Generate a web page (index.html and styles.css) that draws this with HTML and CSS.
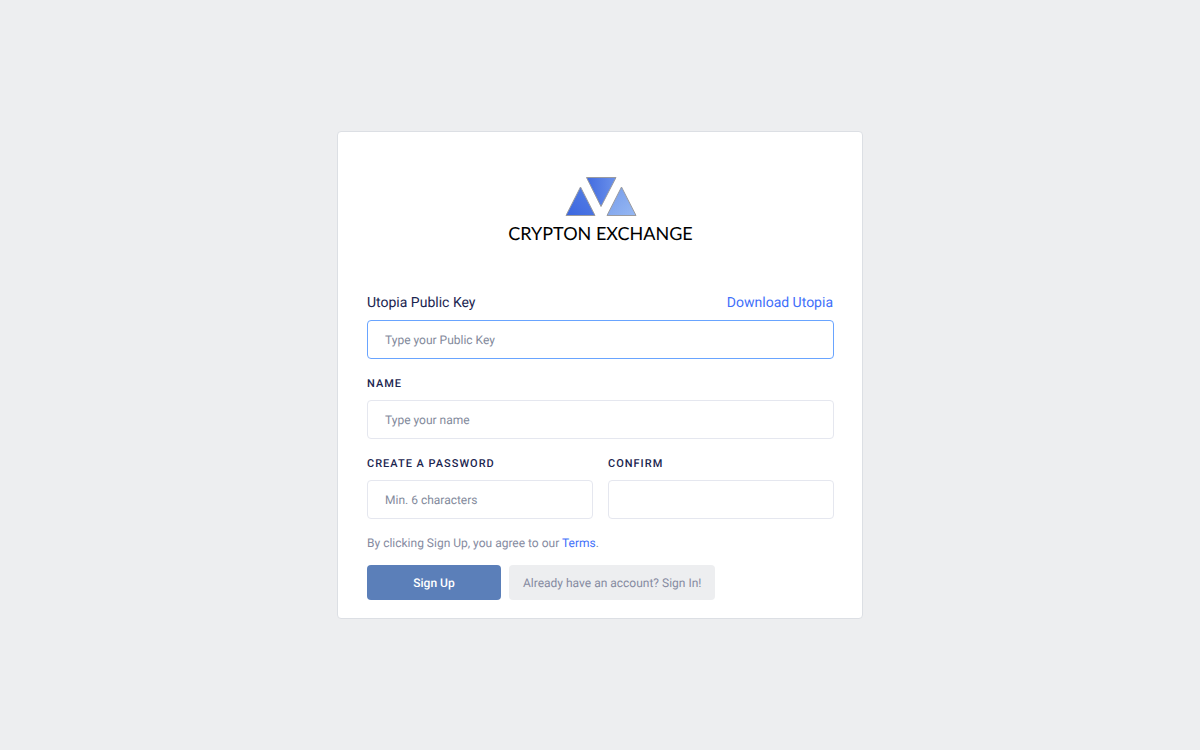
FILE: index.html
```html
<!DOCTYPE html>
<html lang="en">
<head>
<meta charset="utf-8">
<meta name="viewport" content="width=device-width, initial-scale=1">
<title>Crypton Exchange - Sign Up</title>
<link rel="stylesheet" href="styles.css">
</head>
<body>
<main class="card">
  <div class="logo">
    <svg class="logo-mark" width="72" height="40" viewBox="0 0 72 40" aria-hidden="true">
      <defs>
        <linearGradient id="left" x1="0" y1="1" x2="1" y2="0"><stop offset="0" stop-color="#3b66e0"/><stop offset="1" stop-color="#5680e4"/></linearGradient>
        <linearGradient id="middle" x1="0" y1="0" x2="1" y2="0"><stop offset="0" stop-color="#426be0"/><stop offset="1" stop-color="#6c92ea"/></linearGradient>
        <linearGradient id="right" x1="0" y1="0" x2="1" y2="1"><stop offset="0" stop-color="#759bea"/><stop offset="1" stop-color="#96b8f3"/></linearGradient>
      </defs>
      <g stroke="#9a9ba0" stroke-width="1">
        <path d="M15.500 10L30 38.500H1Z" fill="url(#left)"/>
        <path d="M21.500 0.500H51L36 29.500Z" fill="url(#middle)"/>
        <path d="M56.500 10L71 38.500H42Z" fill="url(#right)"/>
      </g>
    </svg>
    <span class="logo-name">CRYPTON EXCHANGE</span>
  </div>
  <form class="form">
    <div class="field">
      <div class="label-row">
        <label class="label-key" for="key">Utopia Public Key</label>
        <a class="download" href="#">Download Utopia</a>
      </div>
      <input class="input input-active" id="key" type="text" placeholder="Type your Public Key">
    </div>
    <div class="field">
      <label class="label" for="name">NAME</label>
      <input class="input" id="name" type="text" placeholder="Type your name">
    </div>
    <div class="pair">
      <div class="field">
        <label class="label" for="password">CREATE A PASSWORD</label>
        <input class="input" id="password" type="password" placeholder="Min. 6 characters">
      </div>
      <div class="field">
        <label class="label" for="confirm">CONFIRM</label>
        <input class="input" id="confirm" type="password">
      </div>
    </div>
    <p class="agree">By clicking Sign Up, you agree to our <a href="#">Terms</a>.</p>
    <div class="actions">
      <button class="button button-primary" type="submit">Sign Up</button>
      <button class="button button-light" type="button">Already have an account? Sign In!</button>
    </div>
  </form>
</main>
</body>
</html>
```
FILE: styles.css
```css
* {
  box-sizing: border-box;
}

body {
  margin: 0;
  min-height: 100vh;
  display: flex;
  align-items: center;
  justify-content: center;
  background: #edeef0;
  color: #1b2550;
  font-family: Roboto, sans-serif;
  font-size: 12px;
  text-rendering: geometricPrecision;
}

a {
  color: #3f70fa;
  text-decoration: none;
}

.card {
  width: 100%;
  max-width: 526px;
  padding: 45px 28px 18px 29px;
  background: #fff;
  border: 1px solid #dcdfe4;
  border-radius: 4px;
}

.logo {
  display: flex;
  flex-direction: column;
  align-items: center;
  margin-bottom: 48px;
}

.logo-name {
  margin-top: 4px;
  color: #000;
  font-family: "Century Gothic", Lato, sans-serif;
  font-size: 18px;
  line-height: 24px;
}

.form {
  display: flex;
  flex-direction: column;
}

.field {
  display: flex;
  flex-direction: column;
  flex: 1;
  min-width: 0;
  margin-bottom: 16px;
}

.label-row {
  display: flex;
  justify-content: space-between;
  margin-bottom: 7px;
  padding-right: 1px;
  font-size: 14px;
  line-height: 20px;
}

.label {
  margin-bottom: 7px;
  font-size: 11px;
  font-weight: 500;
  letter-spacing: 1px;
  line-height: 18px;
}

.input {
  width: 100%;
  height: 39px;
  padding: 0 17px;
  border: 1px solid #e5e7ef;
  border-radius: 4px;
  background: #fff;
  color: #1b2550;
  font: inherit;
  text-rendering: inherit;
}

.input::placeholder {
  color: #838a9c;
  opacity: 1;
}

.input-active {
  border-color: #69a4ff;
}

.pair {
  display: flex;
  gap: 15px;
}

.agree {
  margin: 0 0 14px;
  color: #868ba1;
  line-height: 16px;
}

.actions {
  display: flex;
  gap: 8px;
}

.button {
  height: 35px;
  padding: 0 14px;
  border: 0;
  border-radius: 4px;
  font: inherit;
  text-rendering: inherit;
}

.button-primary {
  width: 134px;
  background: #5b7fb9;
  color: #fff;
  font-weight: 500;
}

.button-light {
  background: #edeef0;
  color: #868ba1;
}
```
